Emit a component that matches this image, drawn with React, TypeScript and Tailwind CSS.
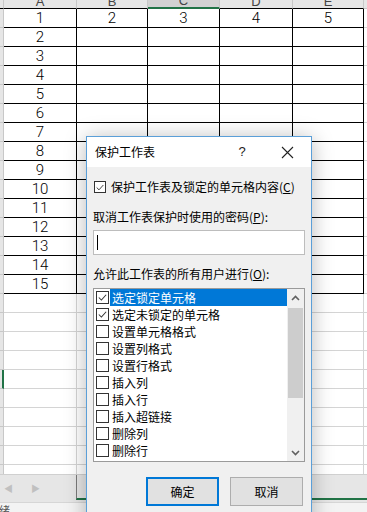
import React from "react";
import clsx from "clsx";

const COLS = [
  { label: "A", w: "w-[73px]" },
  { label: "B", w: "w-[71px]" },
  { label: "C", w: "w-[72px]" },
  { label: "D", w: "w-[73px]" },
  { label: "E", w: "w-[71px]" },
];

const PERMS = [
  { text: "选定锁定单元格", on: true },
  { text: "选定未锁定的单元格", on: true },
  { text: "设置单元格格式", on: false },
  { text: "设置列格式", on: false },
  { text: "设置行格式", on: false },
  { text: "插入列", on: false },
  { text: "插入行", on: false },
  { text: "插入超链接", on: false },
  { text: "删除列", on: false },
  { text: "删除行", on: false },
];

function Check({ on, size = "size-[13px]" }: { on: boolean; size?: string }) {
  return (
    <span className={clsx("flex shrink-0 items-center justify-center border border-[#333] bg-white", size)}>
      {on && (
        <svg viewBox="0 0 12 12" className="size-[11px]">
          <polyline points="2,6 4.8,8.8 10,3" fill="none" stroke="#333" strokeWidth="1.1" />
        </svg>
      )}
    </span>
  );
}

function SheetRow({ n, boxed }: { n: number; boxed: boolean }) {
  return (
    <div className="flex h-[19px] shrink-0">
      <div
        className={clsx(
          "w-[4px] shrink-0 border-b border-r border-[#c8c8c8] bg-[#e6e6e6]",
          n === 20 && "border-r-2 border-r-[#217346]",
        )}
      />
      {COLS.map((c, i) => (
        <div
          key={c.label}
          className={clsx(
            c.w,
            "flex shrink-0 items-center justify-center border-b border-r pt-[1px] font-['Roboto',sans-serif] text-[15px] font-light leading-none text-black",
            boxed ? "border-black" : "border-[#d4d4d4]",
          )}
        >
          {boxed && (i === 0 ? n : n === 1 ? i + 1 : null)}
        </div>
      ))}
      <div className="flex-1 border-b border-[#d4d4d4]" />
    </div>
  );
}

export default function App() {
  const rows = Array.from({ length: 25 }, (_, i) => i + 1);

  return (
    <div className="relative h-[512px] w-[367px] overflow-hidden bg-white font-['Noto_Sans_CJK_SC',sans-serif] text-[12px] text-black">
      {/* sheet */}
      <div className="flex h-[474px] flex-col overflow-hidden">
        <div className="-mt-[11px] flex h-[20px] shrink-0 font-['Liberation_Sans',sans-serif] text-[13px] leading-[12px] text-[#444]">
          <div className="w-[4px] shrink-0 border-b border-r border-b-black border-r-[#c8c8c8] bg-[#e6e6e6]" />
          {COLS.map((c) => (
            <div
              key={c.label}
              className={clsx(
                c.w,
                "flex shrink-0 items-end justify-center border-r border-r-[#c8c8c8]",
                c.label === "C"
                  ? "border-b-2 border-b-[#217346] bg-[#d2d2d2]"
                  : "border-b border-b-black bg-[#e6e6e6]",
              )}
            >
              {c.label}
            </div>
          ))}
          <div className="flex-1 border-b border-b-[#c8c8c8] bg-[#e6e6e6]" />
        </div>
        {rows.map((n) => (
          <SheetRow key={n} n={n} boxed={n <= 15} />
        ))}
      </div>

      {/* sheet tabs */}
      <div className="flex h-[28px] border-t border-[#d0d0d0] bg-[#e6e6e6]">
        <div className="flex w-[76px] items-center gap-[18px] pl-[4px] text-[9px] text-[#c0c0c0]">
          <span>◀</span>
          <span>▶</span>
        </div>
        <div className="h-[25px] flex-1 border-b-2 border-l border-b-[#217346] border-l-[#7a7a7a]" />
      </div>

      {/* status bar */}
      <div className="h-[10px] overflow-hidden border-t border-[#d6d6d6] bg-[#f3f3f3]">
        <span className="-ml-[12px] block text-[11px] leading-[14px] text-[#555]">就绪</span>
      </div>

      {/* dialog */}
      <div className="absolute left-[86px] top-[136px] h-[400px] w-[226px] border border-[#5b9fd8] bg-[#f0f0f0] shadow-[0_2px_20px_rgba(0,0,0,0.28)]">
        <div className="flex h-[30px] items-center bg-white pl-[8px] pr-[17px] leading-[16px]">
          <span>保护工作表</span>
          <span className="ml-auto w-[12px] text-center font-['Liberation_Sans',sans-serif] text-[13px] text-[#222]">?</span>
          <svg viewBox="0 0 13 13" className="ml-[33px] size-[13px]">
            <path d="M1 1 L12 12 M12 1 L1 12" stroke="#222" strokeWidth="1.1" />
          </svg>
        </div>

        <div className="flex flex-col px-[6px] leading-[16px]">
          <div className="mt-[12px] flex h-[16px] items-center">
            <span className="ml-[1px]">
              <Check on size="size-[12px]" />
            </span>
            <span className="ml-[5px]">
              保护工作表及锁定的单元格内容(<span className="underline">C</span>)
            </span>
          </div>

          <div className="mt-[14px] h-[16px]">
            取消工作表保护时使用的密码(<span className="underline">P</span>):
          </div>

          <div className="mt-[5px] flex h-[25px] items-center border border-[#bdbdbd] bg-white pl-[3px]">
            <span className="h-[15px] w-px bg-black" />
          </div>

          <div className="mt-[11px] h-[16px]">
            允许此工作表的所有用户进行(<span className="underline">O</span>):
          </div>

          <div className="mt-[6px] flex h-[174px] border border-[#9a9a9a] bg-white">
            <div className="flex flex-1 flex-col">
              {PERMS.map((p, i) => (
                <div key={p.text} className="flex h-[17px] items-center pl-[2px]">
                  <Check on={p.on} />
                  <span
                    className={clsx(
                      "ml-[1px] flex h-[17px] items-center pl-[2px]",
                      i === 0 ? "flex-1 bg-[#0078d7] text-white" : "text-black",
                    )}
                  >
                    {p.text}
                  </span>
                </div>
              ))}
            </div>
            <div className="flex w-[17px] flex-col bg-[#f0f0f0]">
              <div className="flex h-[17px] items-center justify-center">
                <svg viewBox="0 0 9 6" className="h-[6px] w-[9px]">
                  <polyline points="1,5 4.5,1.5 8,5" fill="none" stroke="#606060" strokeWidth="1.6" />
                </svg>
              </div>
              <div className="mx-px mt-[2px] h-[90px] bg-[#cdcdcd]" />
              <div className="mt-auto flex h-[17px] items-center justify-center">
                <svg viewBox="0 0 9 6" className="h-[6px] w-[9px]">
                  <polyline points="1,1 4.5,4.5 8,1" fill="none" stroke="#606060" strokeWidth="1.6" />
                </svg>
              </div>
            </div>
          </div>

          <div className="mr-[2px] mt-[15px] flex justify-end gap-[11px]">
            <button className="flex h-[29px] w-[73px] items-center justify-center border-2 border-[#0078d7] bg-[#e1e1e1]">
              确定
            </button>
            <button className="flex h-[29px] w-[73px] items-center justify-center border border-[#adadad] bg-[#e1e1e1]">
              取消
            </button>
          </div>
        </div>
      </div>
    </div>
  );
}
